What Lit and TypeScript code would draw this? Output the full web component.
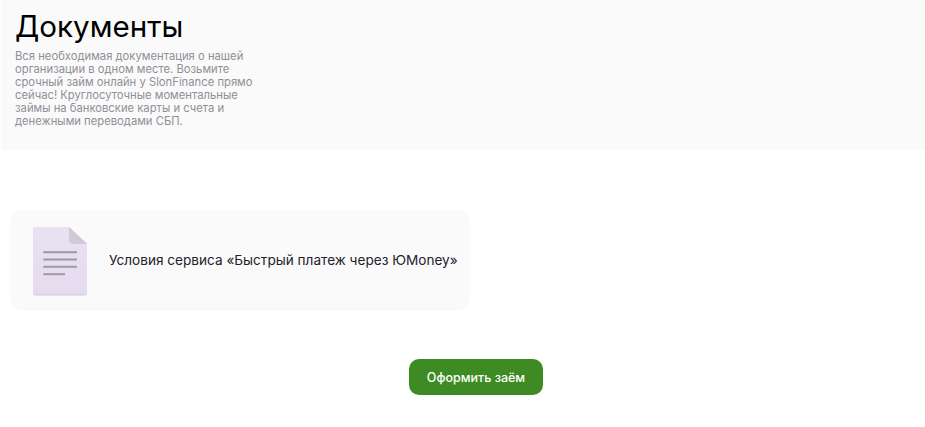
import { LitElement, html, css } from "lit";
import { customElement } from "lit/decorators.js";

@customElement("app-root")
export class AppRoot extends LitElement {
  static styles = css`
    :host {
      display: block;
      width: 925px;
      height: 427px;
      background: #fff;
      overflow: hidden;
      font-family: Inter, "Open Sans", "Noto Sans", sans-serif;
    }
    .hero {
      margin-left: 1px;
      height: 150px;
      box-sizing: border-box;
      background: #fafafa;
      padding: 9px 14px 0;
    }
    h1 {
      margin: 0;
      font-size: 29.6px;
      line-height: 34px;
      font-weight: 400;
      color: #000;
    }
    .hero p {
      margin: 7px 0 0;
      font-size: 11.25px;
      line-height: 13px;
      color: #8f9097;
    }
    .card {
      margin: 60px 0 0 10px;
      width: 460px;
      height: 101px;
      box-sizing: border-box;
      background: #fafafa;
      border-radius: 13px;
      display: flex;
      align-items: center;
      padding-left: 23px;
      gap: 22px;
    }
    .card svg {
      display: block;
      width: 54px;
      height: 70px;
      flex: none;
    }
    .card span {
      font-size: 13.6px;
      line-height: 16px;
      margin-bottom: 2px;
      color: #22222a;
    }
    .actions {
      margin: 48px 0 0 409px;
    }
    .btn {
      display: block;
      width: 134px;
      height: 36px;
      border: 0;
      border-radius: 10px;
      background: #3d8b22;
      color: #fff;
      font: 500 12.5px Inter, "Open Sans", sans-serif;
      padding: 0;
    }
  `;

  render() {
    return html`
      <div class="hero">
        <h1>Документы</h1>
        <p>
          Вся необходимая документация о нашей<br />
          организации в одном месте. Возьмите<br />
          срочный займ онлайн у SlonFinance прямо<br />
          сейчас! Круглосуточные моментальные<br />
          займы на банковские карты и счета и<br />
          денежными переводами СБП.
        </p>
      </div>
      <div class="card">
        <svg viewBox="0 0 54 70" aria-hidden="true">
          <defs>
            <linearGradient id="page" x1="0" y1="0" x2="0" y2="1">
              <stop offset="0" stop-color="#e9e2f3" />
              <stop offset="1" stop-color="#e4dcee" />
            </linearGradient>
          </defs>
          <path d="M3 1H36L54 18V66.500a3 3 0 0 1-3 3H3a3 3 0 0 1-3-3V4a3 3 0 0 1 3-3Z" fill="#cfc6dc" />
          <path d="M3 1H36L54 18V65.500a3 3 0 0 1-3 3H3a3 3 0 0 1-3-3V4a3 3 0 0 1 3-3Z" fill="url(#page)" />
          <path d="M36 1L54 18H40a4 4 0 0 1-4-4Z" fill="#cfc9d8" />
          <g fill="#9f98a8">
            <rect x="10.300" y="25.200" width="33.700" height="2" />
            <rect x="10.300" y="32.500" width="33.700" height="2" />
            <rect x="10.300" y="39.800" width="33.700" height="2" />
            <rect x="10.300" y="47.200" width="21.700" height="2" />
          </g>
        </svg>
        <span>Условия сервиса «Быстрый платеж через ЮMoney»</span>
      </div>
      <div class="actions"><button class="btn">Оформить заём</button></div>
    `;
  }
}
